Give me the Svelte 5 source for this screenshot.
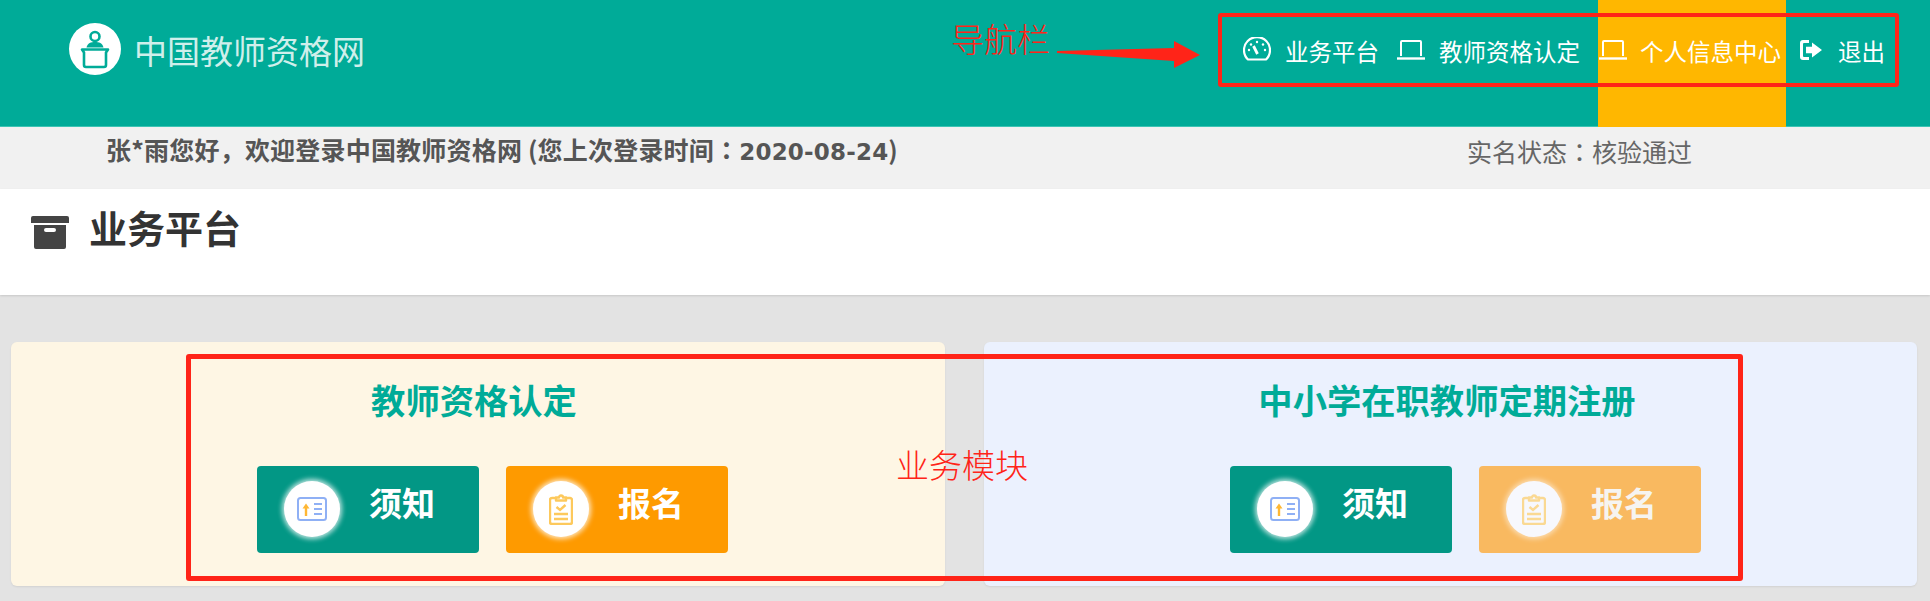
<script>
  const navItems = [
    { label: '业务平台', icon: 'gauge' },
    { label: '教师资格认定', icon: 'laptop' },
    { label: '个人信息中心', icon: 'laptop', active: true },
    { label: '退出', icon: 'exit' }
  ];

  const modules = [
    { title: '教师资格认定', tone: 'cream', disabled: false },
    { title: '中小学在职教师定期注册', tone: 'blue', disabled: true }
  ];
</script>

<div class="page">
  <header class="topbar">
    <div class="brand">
      <svg class="logo" viewBox="0 0 52 52">
        <circle cx="26" cy="26" r="26" fill="#fff" />
        <circle cx="26" cy="13.500" r="4.500" fill="none" stroke="#00ab98" stroke-width="2.600" />
        <path d="M17.500 24.500c1-4.500 4.500-5.500 8.500-5.500s7.500 1 8.500 5.500z" fill="#00ab98" />
        <path d="M13 26.500h26l-2 3v12.500a2 2 0 0 1-2 2H17a2 2 0 0 1-2-2V29.500z" fill="none" stroke="#00ab98" stroke-width="2.600" stroke-linejoin="round" />
      </svg>
      <span class="brand-name">中国教师资格网</span>
    </div>
    <nav class="nav">
      {#each navItems as item}
        <a class="nav-item" class:active={item.active} class:last={item.icon === 'exit'} href="#top">
          {#if item.icon === 'gauge'}
            <svg class="nav-icon gauge" viewBox="0 0 28 24" fill="none" stroke="#fff" stroke-width="2.200">
              <path d="M5 22.500a13 13 0 1 1 18 0z" stroke-linejoin="round" />
              <path d="M10.500 9l4 8" stroke-width="2.800" />
              <circle cx="6" cy="13" r="1.200" fill="#fff" stroke="none" />
              <circle cx="8" cy="7.500" r="1.200" fill="#fff" stroke="none" />
              <circle cx="14" cy="5" r="1.200" fill="#fff" stroke="none" />
              <circle cx="20" cy="7.500" r="1.200" fill="#fff" stroke="none" />
              <circle cx="22" cy="13" r="1.200" fill="#fff" stroke="none" />
            </svg>
          {:else if item.icon === 'laptop'}
            <svg class="nav-icon laptop" viewBox="0 0 28 20" fill="none" stroke="#fff" stroke-width="2">
              <path d="M4 16V2a1 1 0 0 1 1-1h18a1 1 0 0 1 1 1v14" />
              <path d="M0 18.500h28" stroke-width="2.400" />
            </svg>
          {:else}
            <svg class="nav-icon exit" viewBox="0 0 22 20" fill="#fff">
              <path d="M9 0H3a3 3 0 0 0-3 3v14a3 3 0 0 0 3 3h6v-3H4a1 1 0 0 1-1-1V4a1 1 0 0 1 1-1h5z" />
              <path d="M12 2.500l10 7.500-10 7.500v-4.300H6V6.800h6z" />
            </svg>
          {/if}
          <span>{item.label}</span>
        </a>
      {/each}
    </nav>
  </header>

  <div class="welcome">
    <span class="greeting">张*雨您好<span class="punct">，</span>欢迎登录中国教师资格网 (您上次登录时间<span class="punct">：</span><span class="date">2020-08-24</span>)</span>
    <span class="status">实名状态<span class="punct">：</span>核验通过</span>
  </div>

  <section class="heading">
    <svg class="archive" viewBox="0 0 38 33" fill="#444">
      <path d="M2 0h34a2 2 0 0 1 2 2v5H0V2a2 2 0 0 1 2-2z" />
      <path fill-rule="evenodd" d="M3 9h32v22a2 2 0 0 1-2 2H5a2 2 0 0 1-2-2zm12 3a1.500 1.500 0 0 0 0 4h8a1.500 1.500 0 0 0 0-4z" />
    </svg>
    <h1>业务平台</h1>
  </section>

  <main class="modules">
    {#each modules as mod}
      <article class="module {mod.tone}">
        <h2>{mod.title}</h2>
        <div class="actions">
          <a class="action notice" href="#top">
            <span class="badge">
              <svg viewBox="0 0 30 24" fill="none">
                <rect x="1" y="1" width="28" height="22" rx="2.500" stroke="#8fb0f5" stroke-width="2" />
                <path d="M9 19v-8" stroke="#ffb733" stroke-width="2.400" />
                <path d="M5.500 11.500L9 6.500l3.500 5z" fill="#ffb733" />
                <path d="M17 7h8M17 12h8M17 17h8" stroke="#8fb0f5" stroke-width="2" />
              </svg>
            </span>
            <span class="action-label">须知</span>
          </a>
          <a class="action signup" class:disabled={mod.disabled} href="#top">
            <span class="badge">
              <svg viewBox="0 0 24 32" fill="none" stroke="#fdc95c" stroke-width="2.400">
                <path d="M7 5H3a2 2 0 0 0-2 2v22a2 2 0 0 0 2 2h18a2 2 0 0 0 2-2V7a2 2 0 0 0-2-2h-4" />
                <path d="M7 7.500V4.500h3a2 2 0 0 1 4 0h3v3z" stroke-linejoin="round" />
                <path d="M7.500 14l3.500 3 5.500-5" />
                <path d="M5 21h14M5 26h14" />
              </svg>
            </span>
            <span class="action-label">报名</span>
          </a>
        </div>
      </article>
    {/each}
  </main>

  <!-- annotations drawn over the screenshot -->
  <span class="note note-nav">导航栏</span>
  <svg class="arrow" viewBox="0 0 144 28" fill="#ff2418">
    <path d="M0 10L117 7V0L143 14 117 27V20L0 12z" />
  </svg>
  <div class="mark mark-nav"></div>
  <div class="mark mark-modules"></div>
  <span class="note note-modules">业务模块</span>
</div>

<style>
  :global(body) {
    margin: 0;
    background: #e3e3e3;
  }

  .page {
    position: relative;
    width: 1930px;
    height: 601px;
    overflow: hidden;
    font-family: "Noto Sans CJK SC", "Liberation Sans", sans-serif;
  }

  a {
    text-decoration: none;
  }

  .topbar {
    display: flex;
    justify-content: space-between;
    height: 126px;
    padding: 0 45px 0 69px;
    background: #00ab98;
    border-bottom: 1px solid #3cc4b4;
  }

  .brand {
    display: flex;
    align-items: flex-start;
    gap: 13px;
    padding-top: 23px;
  }

  .logo {
    width: 52px;
    height: 52px;
  }

  .brand-name {
    font-size: 33px;
    line-height: 54px;
    color: rgba(255, 255, 255, 0.82);
  }

  .nav {
    display: flex;
  }

  .nav-item {
    display: flex;
    align-items: flex-start;
    gap: 14px;
    height: 127px;
    padding: 0 6px 0 12px;
    color: #fff;
    font-size: 23.500px;
    line-height: 32px;
  }

  .nav-item span {
    padding-top: 35px;
  }

  .nav-item.active {
    gap: 13px;
    margin-left: 12px;
    padding: 0 5px 0 1px;
    background: #ffb700;
  }

  .nav-item.last {
    gap: 16px;
    padding: 0 0 0 14px;
  }

  .nav-icon {
    flex: none;
  }

  .gauge {
    width: 28px;
    height: 24px;
    margin-top: 37px;
  }

  .laptop {
    width: 28px;
    height: 20px;
    margin-top: 40px;
  }

  .exit {
    width: 22px;
    height: 20px;
    margin-top: 40px;
  }

  .welcome {
    display: flex;
    justify-content: space-between;
    height: 62px;
    padding: 0 238px 0 106px;
    background: #f1f1f1;
    font-size: 25px;
    line-height: 48px;
  }

  .greeting {
    font-weight: 700;
    color: #555;
    line-height: 44px;
    letter-spacing: 0.200px;
  }

  .punct {
    font-family: "Noto Sans CJK KR", "Noto Sans CJK SC", sans-serif;
  }

  .date {
    font-family: "DejaVu Sans", "Noto Sans CJK SC", sans-serif;
    font-size: 23px;
  }

  .status {
    color: #666;
  }

  .heading {
    display: flex;
    align-items: flex-start;
    gap: 20px;
    height: 106px;
    padding-left: 31px;
    background: #fff;
    box-shadow: 0 1px 2px rgba(0, 0, 0, 0.12);
  }

  .archive {
    width: 38px;
    height: 33px;
    margin-top: 27px;
  }

  h1 {
    margin: 8px 0 0;
    font-size: 38px;
    font-weight: 700;
    line-height: 60px;
    color: #333;
  }

  .modules {
    display: grid;
    grid-template-columns: 934px 933px;
    gap: 39px;
    padding: 47px 0 0 11px;
  }

  .module {
    height: 244px;
    border-radius: 6px;
    box-shadow: 0 1px 2px rgba(0, 0, 0, 0.08);
  }

  .cream {
    background: #fef6e4;
  }

  .blue {
    background: #ebf1fe;
  }

  h2 {
    width: 926px;
    margin: 0;
    padding-top: 31px;
    font-size: 34.300px;
    font-weight: 700;
    line-height: 52px;
    text-align: center;
    color: #00ab98;
  }

  .actions {
    display: flex;
    gap: 27px;
    margin: 41px 0 0 246px;
  }

  .action {
    display: flex;
    align-items: flex-start;
    width: 222px;
    height: 87px;
    border-radius: 4px;
    color: #fff;
  }

  .notice {
    background: #029785;
  }

  .signup {
    background: #fe9a00;
  }

  .signup.disabled {
    background: #f9b960;
  }

  .badge {
    display: flex;
    align-items: center;
    justify-content: center;
    flex: none;
    width: 56px;
    height: 56px;
    margin: 15px 0 0 27px;
    border-radius: 50%;
    background: #fff;
    box-shadow: 0 0 5px 2px rgba(255, 255, 255, 0.75);
  }

  .badge svg {
    width: 30px;
    height: 32px;
  }

  .notice .badge svg {
    height: 24px;
  }

  .signup .badge svg {
    width: 24px;
  }

  .disabled .badge {
    background: #f7f8fd;
    box-shadow: 0 0 5px 2px rgba(255, 255, 255, 0.5);
  }

  .disabled .badge svg {
    opacity: 0.65;
  }

  .action-label {
    margin: 11px 0 0 29px;
    font-size: 33px;
    font-weight: 700;
    line-height: 50px;
  }

  .disabled .action-label {
    color: #f6f4f0;
  }

  .note {
    position: absolute;
    color: #ff2418;
    font-size: 33px;
    font-weight: 300;
    line-height: 44px;
  }

  .note-nav {
    left: 951px;
    top: 16px;
  }

  .note-modules {
    left: 896px;
    top: 442px;
  }

  .arrow {
    position: absolute;
    left: 1057px;
    top: 41px;
    width: 144px;
    height: 28px;
  }

  .mark {
    position: absolute;
    box-sizing: border-box;
    border: 4px solid #ff2418;
    border-radius: 3px;
  }

  .mark-nav {
    left: 1218px;
    top: 13px;
    width: 681px;
    height: 74px;
  }

  .mark-modules {
    left: 186px;
    top: 354px;
    width: 1557px;
    height: 227px;
    border-width: 5px;
  }
</style>
